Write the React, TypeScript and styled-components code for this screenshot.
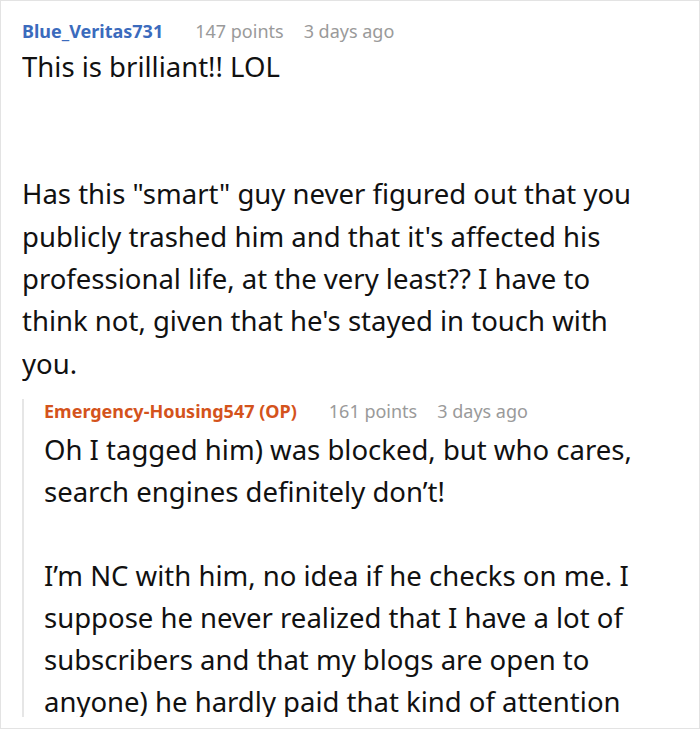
import React from "react";
import styled, { createGlobalStyle } from "styled-components";

const GlobalStyle = createGlobalStyle`
  html, body {
    margin: 0;
    padding: 0;
    background: #fff;
  }
  body {
    font-family: "Noto Sans", "Open Sans", sans-serif;
    color: #111;
  }
`;

interface IComment {
  author: string;
  op?: boolean;
  points: number;
  age: string;
  // an empty string stands for a blank line
  paragraphs: string[];
}

const Frame = styled.div`
  box-sizing: border-box;
  width: 700px;
  height: 729px;
  border: 1px solid #e3e3e3;
  padding: 18px 46px 11px 21px;
`;

const Clip = styled.div`
  height: 100%;
  overflow: hidden;
`;

const CommentBox = styled.div<{ $reply?: boolean }>`
  ${(p) =>
    p.$reply &&
    `
    margin-top: 14px;
    padding-left: 20px;
    border-left: 2px solid #e6e6e6;
  `}
`;

const Meta = styled.div`
  display: flex;
  align-items: baseline;
  font-size: 18px;
  line-height: 24px;
  color: #9a9a9a;
  white-space: nowrap;
`;

const Author = styled.span<{ $op?: boolean }>`
  font-weight: 700;
  color: ${(p) => (p.$op ? "#d4531c" : "#3b6bbd")};
  margin-right: 12px;
`;

const MetaItem = styled.span`
  margin-left: 20px;
`;

const Body = styled.div<{ $reply?: boolean }>`
  font-size: 27.5px;
  line-height: ${(p) => (p.$reply ? "42px" : "42.4px")};
  padding-top: ${(p) => (p.$reply ? "6px" : "3px")};
`;

const Para = styled.p`
  margin: 0 0 1lh 0;
  &:last-child {
    margin-bottom: 0;
  }
`;

const Blank = styled.div`
  height: 1lh;
`;

function Comment({ c, reply }: { c: IComment; reply?: boolean }) {
  return (
    <CommentBox $reply={reply}>
      <Meta>
        <Author $op={c.op}>
          {c.author}
          {c.op ? " (OP)" : ""}
        </Author>
        <MetaItem>{c.points} points</MetaItem>
        <MetaItem>{c.age}</MetaItem>
      </Meta>
      <Body $reply={reply}>
        {c.paragraphs.map((t, i) =>
          t === "" ? <Blank key={i} /> : <Para key={i}>{t}</Para>
        )}
      </Body>
    </CommentBox>
  );
}

const parent: IComment = {
  author: "Blue_Veritas731",
  points: 147,
  age: "3 days ago",
  paragraphs: [
    "This is brilliant!! LOL",
    "",
    "Has this \"smart\" guy never figured out that you publicly trashed him and that it's affected his professional life, at the very least?? I have to think not, given that he's stayed in touch with you.",
  ],
};

const reply: IComment = {
  author: "Emergency-Housing547",
  op: true,
  points: 161,
  age: "3 days ago",
  paragraphs: [
    "Oh I tagged him) was blocked, but who cares, search engines definitely don’t!",
    "I’m NC with him, no idea if he checks on me. I suppose he never realized that I have a lot of subscribers and that my blogs are open to anyone) he hardly paid that kind of attention to me.",
  ],
};

export default function App() {
  return (
    <>
      <GlobalStyle />
      <Frame>
        <Clip>
          <Comment c={parent} />
          <Comment c={reply} reply />
        </Clip>
      </Frame>
    </>
  );
}
